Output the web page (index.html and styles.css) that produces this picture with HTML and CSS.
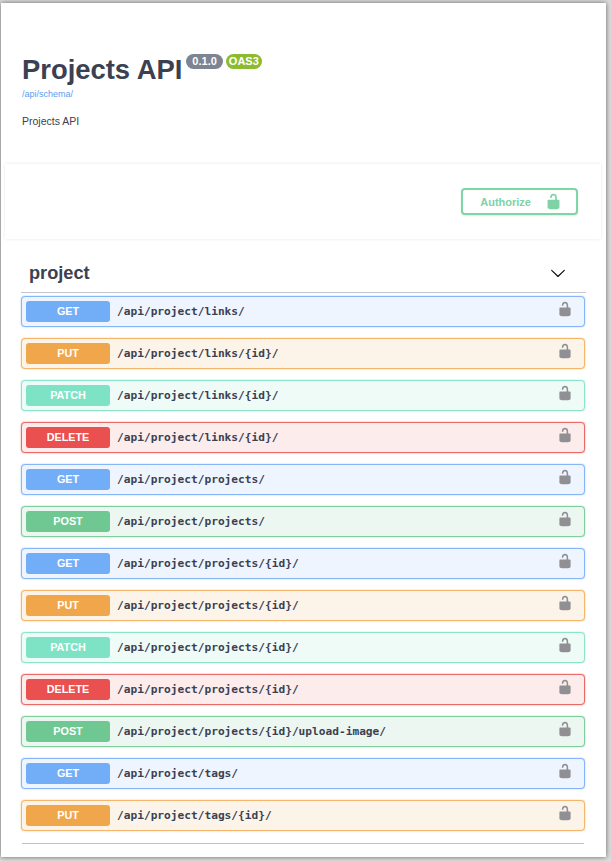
FILE: index.html
```html
<!DOCTYPE html>
<html lang="en">
<head>
    <meta charset="UTF-8">
    <title>Projects API</title>
    <link rel="stylesheet" href="styles.css">
</head>
<body>
    <div class="page">
        <div class="info">
            <div class="title-row">
                <h1>Projects API</h1>
                <span class="badge version">0.1.0</span>
                <span class="badge oas">OAS3</span>
            </div>
            <a class="schema-link" href="#">/api/schema/</a>
            <p class="description">Projects API</p>
        </div>

        <div class="scheme-bar">
            <button class="authorize">
                <span>Authorize</span>
                <svg width="17" height="17" viewBox="0 0 20 20"><use href="#lock"/></svg>
            </button>
        </div>

        <div class="tag">
            <h3>project</h3>
            <svg class="chevron" width="16" height="16" viewBox="0 0 20 20"><path fill="currentColor" d="M17.418 6.109c.272-.268.709-.268.979 0s.271.701 0 .969l-7.908 7.83c-.27.268-.707.268-.979 0l-7.908-7.83c-.27-.268-.27-.701 0-.969.271-.268.709-.268.979 0L10 13.25l7.418-7.141z"/></svg>
        </div>

        <div class="ops">
            <div class="op get"><span class="method">GET</span><span class="path">/api/project/links/</span><svg class="lock" width="16" height="16" viewBox="0 0 20 20"><use href="#lock"/></svg></div>
            <div class="op put"><span class="method">PUT</span><span class="path">/api/project/links/{id}/</span><svg class="lock" width="16" height="16" viewBox="0 0 20 20"><use href="#lock"/></svg></div>
            <div class="op patch"><span class="method">PATCH</span><span class="path">/api/project/links/{id}/</span><svg class="lock" width="16" height="16" viewBox="0 0 20 20"><use href="#lock"/></svg></div>
            <div class="op delete"><span class="method">DELETE</span><span class="path">/api/project/links/{id}/</span><svg class="lock" width="16" height="16" viewBox="0 0 20 20"><use href="#lock"/></svg></div>
            <div class="op get"><span class="method">GET</span><span class="path">/api/project/projects/</span><svg class="lock" width="16" height="16" viewBox="0 0 20 20"><use href="#lock"/></svg></div>
            <div class="op post"><span class="method">POST</span><span class="path">/api/project/projects/</span><svg class="lock" width="16" height="16" viewBox="0 0 20 20"><use href="#lock"/></svg></div>
            <div class="op get"><span class="method">GET</span><span class="path">/api/project/projects/{id}/</span><svg class="lock" width="16" height="16" viewBox="0 0 20 20"><use href="#lock"/></svg></div>
            <div class="op put"><span class="method">PUT</span><span class="path">/api/project/projects/{id}/</span><svg class="lock" width="16" height="16" viewBox="0 0 20 20"><use href="#lock"/></svg></div>
            <div class="op patch"><span class="method">PATCH</span><span class="path">/api/project/projects/{id}/</span><svg class="lock" width="16" height="16" viewBox="0 0 20 20"><use href="#lock"/></svg></div>
            <div class="op delete"><span class="method">DELETE</span><span class="path">/api/project/projects/{id}/</span><svg class="lock" width="16" height="16" viewBox="0 0 20 20"><use href="#lock"/></svg></div>
            <div class="op post"><span class="method">POST</span><span class="path">/api/project/projects/{id}/upload-image/</span><svg class="lock" width="16" height="16" viewBox="0 0 20 20"><use href="#lock"/></svg></div>
            <div class="op get"><span class="method">GET</span><span class="path">/api/project/tags/</span><svg class="lock" width="16" height="16" viewBox="0 0 20 20"><use href="#lock"/></svg></div>
            <div class="op put"><span class="method">PUT</span><span class="path">/api/project/tags/{id}/</span><svg class="lock" width="16" height="16" viewBox="0 0 20 20"><use href="#lock"/></svg></div>
        </div>
        <div class="end-line"></div>
    </div>

    <svg class="defs" width="0" height="0"><defs><path id="lock" fill="currentColor" d="M15.8 8H14V5.6C14 2.703 12.665 1 10 1 7.334 1 6 2.703 6 5.6V6h2v-.801C8 3.754 8.797 3 10 3c1.203 0 2 .754 2 2.199V8H4c-.553 0-1 .646-1 1.199V17c0 .549.428 1.139.951 1.307l1.197.387C5.672 18.861 6.55 19 7.1 19h5.8c.549 0 1.428-.139 1.951-.307l1.196-.387c.524-.167.953-.757.953-1.306V9.199C17 8.646 16.352 8 15.8 8z"/></defs></svg>
</body>
</html>
```

FILE: styles.css
```css
* {
    box-sizing: border-box;
}

html, body {
    height: 100%;
}

body {
    margin: 0;
    padding: 3px 5px 5px 1px;
    background-color: #dcdcdc;
    font-family: "Liberation Sans", Arial, sans-serif;
    overflow: hidden;
}

.page {
    height: 854px;
    background-color: #fff;
    box-shadow: 0 0 5px rgba(0,0,0,0.55);
}

.info {
    padding: 49px 0 0 21px;
    height: 161px;
}

.title-row {
    display: flex;
    align-items: flex-start;
}

h1 {
    margin: 0;
    font-size: 27.4px;
    line-height: 36px;
    font-weight: bold;
    color: #3b4151;
}

.badge {
    margin-top: 2px;
    height: 15px;
    border-radius: 8px;
    color: #fff;
    font-size: 11px;
    line-height: 15px;
    font-weight: bold;
}

.version {
    margin-left: 4px;
    padding: 0 6px;
    background-color: #7d8492;
}

.oas {
    margin-left: 3px;
    padding: 0 3px;
    background-color: #8dbb2f;
}

.schema-link {
    display: block;
    margin-top: -1px;
    font-size: 9px;
    line-height: 14px;
    color: #5b9df0;
    text-decoration: none;
}

.description {
    margin: 13px 0 0;
    font-size: 10.5px;
    line-height: 14px;
    color: #3b4151;
}

.scheme-bar {
    display: flex;
    justify-content: flex-end;
    align-items: center;
    height: 75px;
    margin: 0 5px 0 4px;
    padding-right: 23px;
    background-color: #fff;
    box-shadow: 0 0 3px rgba(0,0,0,0.1);
}

.authorize {
    display: flex;
    justify-content: flex-end;
    align-items: center;
    gap: 14px;
    width: 117px;
    height: 27px;
    padding: 0 14px 0 0;
    background-color: #fff;
    border: 2px solid #7ed6a6;
    border-radius: 4px;
    color: #7dd3a3;
    font-family: "Liberation Sans", Arial, sans-serif;
    font-size: 11px;
    font-weight: bold;
    box-shadow: 0 1px 2px rgba(0,0,0,0.1);
}

.tag {
    display: flex;
    justify-content: space-between;
    align-items: center;
    height: 54px;
    margin: 0 20px;
    padding: 16px 20px 0 8px;
    border-bottom: 1px solid #c4c6cb;
}

h3 {
    margin: 0;
    font-size: 18.2px;
    font-weight: bold;
    color: #3b4151;
}

.chevron {
    color: #111;
    margin-top: -1px;
}

.ops {
    display: flex;
    flex-direction: column;
    gap: 11px;
    margin: 3px 21px 0 20px;
}

.op {
    display: flex;
    align-items: center;
    height: 31px;
    padding: 0 11px 0 4px;
    border: 1px solid;
    border-radius: 4px;
}

.method {
    width: 84px;
    height: 21px;
    border-radius: 3px;
    color: #fff;
    font-size: 10.8px;
    font-weight: bold;
    line-height: 21px;
    text-align: center;
}

.path {
    flex: 1;
    margin-left: 7px;
    font-family: "DejaVu Sans Mono", monospace;
    font-size: 11.18px;
    font-weight: bold;
    color: #3b4151;
}

.lock {
    color: #8f8f94;
    margin-top: -5px;
}

.get { background-color: #eff5ff; border-color: #86b6f8; box-shadow: 0 0 1.5px #86b6f8; }
.get .method { background-color: #72aef8; }

.put { background-color: #fdf4e9; border-color: #f5b56a; box-shadow: 0 0 1.5px #f5b56a; }
.put .method { background-color: #f0a64a; }

.patch { background-color: #eefbf7; border-color: #8ce5cb; box-shadow: 0 0 1.5px #8ce5cb; }
.patch .method { background-color: #7ee3c4; }

.delete { background-color: #fcecec; border-color: #ea6a6a; box-shadow: 0 0 1.5px #ea6a6a; }
.delete .method { background-color: #ea5050; }

.post { background-color: #edf7f2; border-color: #80cd9e; box-shadow: 0 0 1.5px #80cd9e; }
.post .method { background-color: #6fc892; }

.end-line {
    height: 1px;
    margin: 12px 22px 0 21px;
    background-color: #8edcc0;
}

.defs {
    position: absolute;
}
```
